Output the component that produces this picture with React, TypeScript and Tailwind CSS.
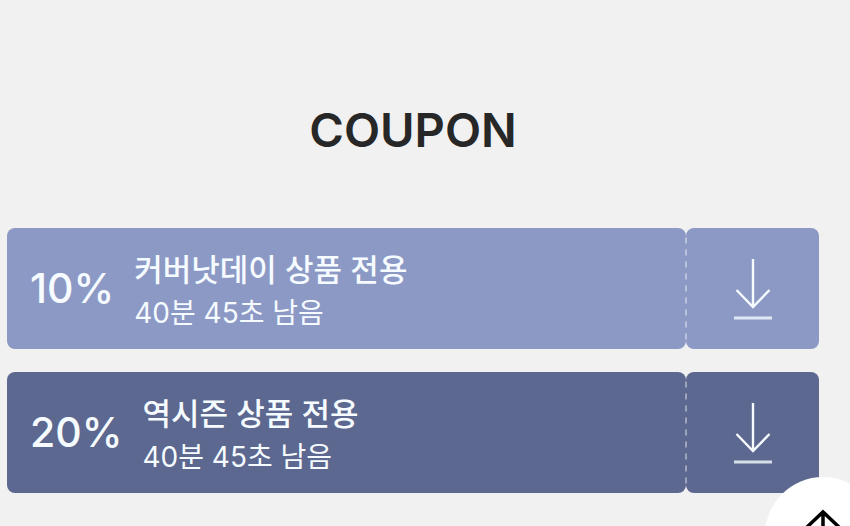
import React from "react";
import { twMerge } from "tailwind-merge";

type Coupon = {
  rate: string;
  title: string;
  timeLeft: string;
  color: string;
};

const coupons: Coupon[] = [
  {
    rate: "10%",
    title: "커버낫데이 상품 전용",
    timeLeft: "40분 45초 남음",
    color: "bg-[#8c99c5]",
  },
  {
    rate: "20%",
    title: "역시즌 상품 전용",
    timeLeft: "40분 45초 남음",
    color: "bg-[#5c688f]",
  },
];

const DownloadIcon = () => (
  <svg width="40" height="64" viewBox="0 0 40 64" fill="none" stroke="currentColor" strokeWidth="2.4">
    <path d="M20 2V50M3.5 33L20 50L36.5 33" />
    <path d="M1 61H39" strokeWidth="3" opacity="0.8" />
  </svg>
);

// Dashed tear line between the coupon body and the download stub
const TearLine = () => (
  <svg className="h-full w-full" viewBox="0 0 2 121" fill="none">
    <path d="M1 9V112" stroke="#ffffff" strokeOpacity="0.4" strokeWidth="2" strokeDasharray="6 6" strokeDashoffset="-0.5" />
  </svg>
);

const CouponRow = ({ coupon }: { coupon: Coupon }) => (
  <li className="flex h-[121px] text-[#f5fbff]">
    <div className={twMerge("flex min-w-0 flex-1 items-center gap-5 rounded-lg pl-[23px]", coupon.color)}>
      <strong className="text-[41px] leading-none font-medium">{coupon.rate}</strong>
      <div className="pt-1.5 whitespace-nowrap">
        <h2 className="text-[31px] leading-[42px] font-medium">{coupon.title}</h2>
        <p className="text-[28px] leading-[44px]">{coupon.timeLeft}</p>
      </div>
    </div>
    <div className={twMerge("z-10 -mx-px my-2 w-0.5 shrink-0", coupon.color)}>
      <div className="-my-2 h-[121px]">
        <TearLine />
      </div>
    </div>
    <button
      type="button"
      aria-label={`${coupon.title} 쿠폰 다운로드`}
      className={twMerge("flex w-[133px] shrink-0 items-center justify-center rounded-lg", coupon.color)}
    >
      <DownloadIcon />
    </button>
  </li>
);

const ScrollTopButton = () => (
  <button
    type="button"
    aria-label="맨 위로"
    onClick={() => window.scrollTo({ top: 0, behavior: "smooth" })}
    className="fixed -right-[31px] -bottom-[67px] z-20 flex size-[116px] items-center justify-center rounded-full bg-white text-black"
  >
    <svg width="40" height="52" viewBox="0 0 40 52" fill="none" stroke="currentColor" strokeWidth="3.5">
      <path d="M20 51V3M3 19L20 3L37 19" />
    </svg>
  </button>
);

export default function App() {
  return (
    <main className="min-h-screen bg-[#f1f1f1] pt-[100px] pr-[31px] pb-8 pl-[7px] font-['Inter','Noto_Sans_CJK_KR',sans-serif]">
      <h1 className="text-center text-[47px] leading-[60px] font-semibold text-[#272727]">COUPON</h1>
      <ul className="mt-[68px] flex flex-col gap-[23px]">
        {coupons.map((coupon) => (
          <CouponRow key={coupon.rate} coupon={coupon} />
        ))}
      </ul>
      <ScrollTopButton />
    </main>
  );
}
